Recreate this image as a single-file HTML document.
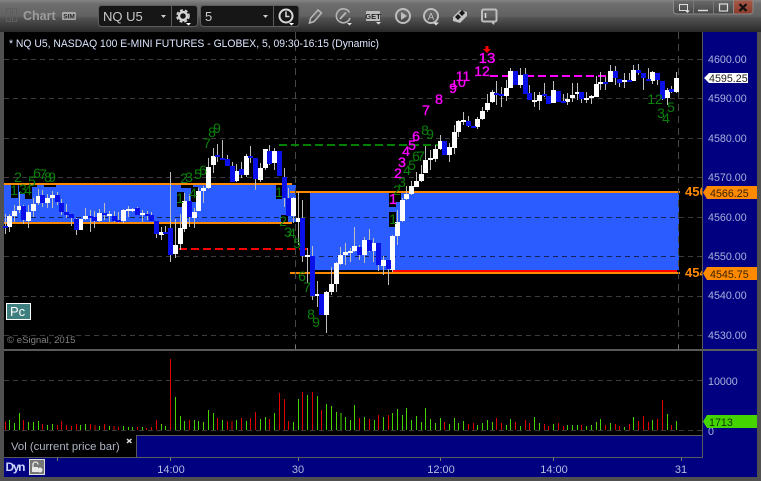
<!DOCTYPE html>
<html><head><meta charset="utf-8"><title>Chart</title>
<style>
html,body{margin:0;padding:0;background:#444;width:761px;height:481px;overflow:hidden}
svg{display:block;font-family:"Liberation Sans",sans-serif}
</style></head><body>
<svg width="761" height="481" viewBox="0 0 761 481" xmlns="http://www.w3.org/2000/svg">
<defs>
<linearGradient id="t1" x1="0" y1="0" x2="0" y2="1"><stop offset="0" stop-color="#858585"/><stop offset=".12" stop-color="#6e6e6e"/><stop offset=".5" stop-color="#626262"/><stop offset=".56" stop-color="#525252"/><stop offset="1" stop-color="#292929"/></linearGradient>
<linearGradient id="cl" x1="0" y1="0" x2="0" y2="1"><stop offset="0" stop-color="#a85a48"/><stop offset="1" stop-color="#8a3a2a"/></linearGradient>
<linearGradient id="wb" x1="0" y1="0" x2="0" y2="1"><stop offset="0" stop-color="#6a6a6a"/><stop offset="1" stop-color="#454545"/></linearGradient>
</defs>
<rect width="761" height="481" fill="#505050"/>
<rect width="761" height="32" fill="url(#t1)"/>
<!-- panes -->
<rect x="4" y="32" width="698" height="425" fill="#000"/>
<rect x="703" y="32" width="54" height="445" fill="#000080"/>
<rect x="4" y="457" width="699" height="20" fill="#000080"/>
<rect x="136" y="436" width="566" height="21" fill="#000080"/>
<g fill="#5a5a5a" shape-rendering="crispEdges">
<rect x="702" y="32" width="1" height="426"/>
<rect x="4" y="349" width="753" height="2"/>
<rect x="136" y="435" width="566" height="1"/>
<rect x="4" y="457" width="699" height="1"/>
<rect x="136" y="435" width="1" height="22"/>
</g>
<!-- grid -->
<g stroke="#3c3c3c" stroke-width="1" stroke-dasharray="5 4" shape-rendering="crispEdges" fill="none">
<path d="M4 59.5H702M4 98.5H702M4 138.5H702M4 177.5H702M4 217.5H702M4 256.5H702M4 296.5H702M4 335.5H702M4 380.5H702M4 430.5H702"/>
</g>
<!-- blue zones -->
<g shape-rendering="crispEdges">
<rect x="4" y="185" width="292" height="37" fill="#2a5cff"/>
<rect x="310" y="193" width="369" height="77" fill="#2a5cff"/>
<path d="M4 217.5H296M310 217.5H679M310 256.5H679" stroke="#15225a" stroke-dasharray="5 4" fill="none"/>
<g fill="#000">
<rect x="11" y="185" width="7" height="13"/><rect x="19" y="185" width="6" height="9"/><rect x="25" y="185" width="7" height="14"/><rect x="32" y="185" width="5" height="2"/><rect x="44" y="185" width="12" height="2"/>
<rect x="177" y="192" width="7" height="15"/><rect x="181" y="185" width="12" height="3"/><rect x="191" y="187" width="7" height="15"/>
<rect x="276" y="185" width="6" height="14"/><rect x="281" y="215" width="7" height="8"/>
<rect x="389" y="193" width="7" height="14"/><rect x="389" y="212" width="7" height="15"/><rect x="394" y="193" width="7" height="9"/>
</g>
<path d="M4 184H292M4 223H292M290 192H680" stroke="#ff8a00" stroke-width="2" fill="none"/>
<path d="M392 271H677" stroke="#f00" stroke-width="2"/>
<path d="M290 273H680" stroke="#ff8a00" stroke-width="2"/>
<path d="M295.5 32V349M678.5 32V349" stroke="#484848" stroke-dasharray="7 5" fill="none"/>
<path d="M279 145H440" stroke="#008000" stroke-width="2" stroke-dasharray="8 4" fill="none"/>
<path d="M179 249H310" stroke="#f00" stroke-width="2" stroke-dasharray="8 4" fill="none"/>
<path d="M490 76H606" stroke="#f0f" stroke-width="2" stroke-dasharray="8 4" fill="none"/>
<!-- wicks -->
<path fill="none" stroke="#bdbdbd" d="M5.5 214V234M9.5 214V232M14.5 205V222M19.5 192V213M23.5 205V224M28.5 205V228M33.5 198V217M38.5 189V205M42.5 190V207M47.5 194V208M52.5 191V208M57.5 192V205M61.5 199V215M66.5 204V218M71.5 214V226M76.5 218V235M85.5 208V220M90.5 210V232M94.5 211V228M99.5 209V222M104.5 203V220M109.5 211V222M114.5 211V222M118.5 212V223M123.5 209V223M128.5 206V217M132.5 208V212M137.5 207V215M142.5 210V222M147.5 211V220M151.5 212V221M156.5 221V238M161.5 227V240M165.5 226V234M170.5 172V262M175.5 219V258M180.5 214V250M184.5 193V232M189.5 194V227M194.5 208V228M198.5 188V211M203.5 186V203M208.5 158V189M213.5 148V173M217.5 144V162M222.5 140V160M227.5 155V166M232.5 162V182M236.5 164V182M241.5 162V178M246.5 154V177M250.5 146V163M255.5 158V190M260.5 163V182M265.5 149V170M269.5 145V165M274.5 148V170M284.5 168V207M288.5 188V216M293.5 197V223M298.5 192V245M302.5 200V262M307.5 248V283M312.5 246V300M317.5 281V307M326.5 291V333M331.5 267V295M336.5 262V292M340.5 247V265M345.5 243V265M350.5 248V262M354.5 227V252M359.5 245V260M364.5 237V263M369.5 229V252M373.5 238V262M378.5 243V271M383.5 256V275M388.5 260V285M392.5 235V272M397.5 210V245M402.5 198V222M406.5 186V200M411.5 181V195M416.5 172V187M421.5 165V182M425.5 146V173M430.5 150V170M435.5 145V162M440.5 135V150M449.5 143V162M454.5 125V154M458.5 120V137M463.5 112V125M468.5 116V127M477.5 117V129M482.5 107V120M487.5 94V112M492.5 90V103M496.5 81V105M501.5 87V107M506.5 80V101M510.5 68V88M520.5 68V88M525.5 68V94M529.5 85V100M534.5 92V107M539.5 92V110M544.5 83V97M553.5 81V103M563.5 94V103M567.5 93V105M572.5 83V102M577.5 83V100M581.5 92V103M586.5 92V103M591.5 95V104M596.5 76V97M600.5 72V90M605.5 77V90M610.5 65V82M615.5 66V85M619.5 79V87M624.5 73V88M629.5 73V82M633.5 65V81M638.5 64V75M643.5 73V90M648.5 68V81M652.5 71V84M657.5 73V85M662.5 81V100M667.5 88V105M671.5 86V93M676.5 72V93"/>
<!-- white bodies -->
<path fill="none" stroke="#fff" stroke-width="5" d="M9.5 216V227M14.5 211V216M19.5 206V210M28.5 212V221M33.5 204V211M38.5 196V203M47.5 198V203M52.5 195V198M80.5 219V230M85.5 216V219M99.5 213V221M109.5 214V216M123.5 210V221M128.5 209V211M132.5 209V211M142.5 213V215M161.5 232V235M175.5 245V254M180.5 228V244M184.5 201V229M194.5 212V218M198.5 191V211M203.5 188V191M208.5 167V188M213.5 156V165M236.5 171V181M246.5 156V175M260.5 168V180M265.5 149V168M274.5 151V163M293.5 198V216M298.5 218V222M307.5 255V257M317.5 294V296M326.5 292V315M331.5 284V292M336.5 263V284M340.5 255V264M345.5 252V255M350.5 251V253M354.5 246V251M364.5 240V255M373.5 243V251M383.5 260V266M392.5 236V270M397.5 222V236M402.5 200V221M406.5 194V199M411.5 186V194M416.5 181V187M421.5 174V181M425.5 160V173M430.5 158V160M435.5 149V159M440.5 141V149M449.5 147V155M454.5 132V148M458.5 121V132M463.5 120V122M477.5 119V127M482.5 111V119M487.5 103V110M492.5 92V102M506.5 88V96M510.5 71V88M520.5 75V85M534.5 100V102M539.5 95V101M553.5 90V103M567.5 99V102M572.5 95V98M577.5 92V94M586.5 98V100M591.5 96V98M596.5 84V97M600.5 82V84M610.5 71V82M624.5 80V82M633.5 70V81M652.5 72V81M667.5 90V98M676.5 78V92"/>
<!-- blue bodies -->
<path fill="none" stroke="#0a10e8" stroke-width="5" d="M5.5 226V228M23.5 206V220M42.5 195V203M57.5 195V202M61.5 203V212M66.5 212V215M71.5 214V218M76.5 219V230M90.5 216V218M94.5 217V221M104.5 213V215M114.5 216V221M118.5 220V222M137.5 208V215M147.5 214V216M151.5 215V221M156.5 221V234M165.5 232V234M170.5 228V255M189.5 201V217M217.5 155V157M222.5 158V160M227.5 159V166M232.5 166V182M241.5 169V175M250.5 156V158M255.5 158V179M269.5 151V164M279.5 151V176M284.5 177V198M288.5 198V216M302.5 218V256M312.5 256V296M321.5 294V315M359.5 247V255M369.5 240V251M378.5 243V265M388.5 260V269M444.5 141V155M468.5 121V126M473.5 126V128M496.5 93V95M501.5 94V96M515.5 71V85M525.5 74V94M529.5 93V100M544.5 94V96M548.5 96V104M558.5 91V102M563.5 101V103M581.5 92V99M605.5 82V84M615.5 71V78M619.5 79V83M629.5 80V82M638.5 70V73M643.5 73V78M648.5 79V81M657.5 73V80M662.5 81V99M671.5 89V92"/>
<!-- volume -->
<g transform="translate(0 340) scale(.33333)" fill="none" stroke-width="3">
<path stroke="#45d400" d="M28 270V240M43 270V249M58 270V219M86 270V246M100 270V246M115 270V243M143 270V255M157 270V252M242 270V255M257 270V252M299 270V258M328 270V258M371 270V258M385 270V261M398 270V261M427 270V261M484 270V252M497 270V258M526 270V171M541 270V228M553 270V243M583 270V240M596 270V243M610 270V246M625 270V210M640 270V219M667 270V240M709 270V240M739 270V243M781 270V237M796 270V231M823 270V219M881 270V246M895 270V177M923 270V165M952 270V168M979 270V192M994 270V198M1009 270V216M1023 270V219M1036 270V231M1051 270V240M1063 270V195M1093 270V231M1123 270V240"/>
<path stroke="#e00000" d="M16 270V245M71 270V240M128 270V252M172 270V255M185 270V243M200 270V255M214 270V258M229 270V252M271 270V252M285 270V255M314 270V252M342 270V258M356 270V261M413 270V261M440 270V264M455 270V261M470 270V240M511 270V57M568 270V240M653 270V234M682 270V243M696 270V243M724 270V234M751 270V234M766 270V216M808 270V237M838 270V159M853 270V177M866 270V243M908 270V156M938 270V156M965 270V210M1078 270V234M1108 270V237M1136 270V225"/>
<g transform="translate(1140 0)">
<path stroke="#45d400" d="M10 270V231M37 270V219M52 270V207M67 270V225M79 270V204M94 270V240M109 270V228M124 270V246M136 270V204M151 270V237M166 270V249M181 270V234M208 270V252M223 270V234M235 270V249M250 270V243M292 270V255M307 270V249M322 270V240M337 270V246M379 270V255M391 270V237M421 270V258M463 270V231M478 270V249M520 270V252M562 270V255M577 270V255M592 270V255M619 270V258M634 270V255M649 270V246M661 270V237M691 270V249M733 270V261M760 270V231M817 270V240M862 270V222M889 270V243"/>
<path stroke="#e00000" d="M25 270V225M193 270V246M265 270V252M280 270V249M349 270V234M364 270V249M406 270V246M436 270V240M448 270V249M493 270V252M505 270V258M535 270V249M550 270V258M604 270V255M676 270V255M706 270V252M718 270V258M748 270V252M775 270V243M790 270V228M805 270V246M832 270V237M847 270V180M874 270V255"/>
</g>
</g>
<!-- ticks -->
<path stroke="#777" fill="none" d="M295.5 345V349M678.5 345V349M57.5 458V461M170.5 458V461M298.5 458V461M440.5 458V461M553.5 458V461M681.5 458V461"/>
</g>
<!-- Sequential counts -->
<g fill="#0a800a" font-size="14" text-anchor="middle">
<text x="18" y="182">2</text><text x="14" y="195">1</text><text x="23" y="194">3</text><text x="28" y="195">4</text><text x="32" y="186">5</text><text x="37" y="178">6</text><text x="43" y="179">7</text><text x="48" y="182">8</text><text x="52" y="182">9</text>
<text x="207" y="148">7</text><text x="212" y="137">8</text><text x="217" y="133">9</text>
<text x="180" y="203">1</text><text x="184" y="183">2</text><text x="189" y="182">3</text><text x="193" y="198">4</text><text x="198" y="179">5</text><text x="203" y="175">6</text>
<text x="279" y="197">1</text><text x="283" y="226">2</text><text x="288" y="237">3</text><text x="292" y="238">4</text><text x="297" y="248">5</text><text x="302" y="281">6</text><text x="307" y="292">7</text><text x="311" y="319">8</text><text x="316" y="327">9</text>
<text x="393" y="224">1</text><text x="397" y="195">2</text><text x="402" y="187">3</text><text x="407" y="175">4</text><text x="412" y="170">5</text><text x="416" y="161">6</text><text x="421" y="161">7</text><text x="425" y="135">8</text><text x="430" y="139">9</text>
<text x="655" y="104">12</text><text x="661" y="118">3</text><text x="666" y="123">4</text><text x="671" y="112">5</text>
</g>
<g fill="#f0f" stroke="#f0f" stroke-width=".35" font-size="14" text-anchor="middle">
<text x="393" y="204" font-size="15">1</text><text x="398" y="178">2</text><text x="402" y="167">3</text><text x="406" y="156">4</text><text x="412" y="150">5</text><text x="416" y="141">6</text><text x="426" y="115">7</text><text x="439" y="104">8</text>
<text x="453" y="93">9</text><text x="458" y="87">10</text>
<rect x="449" y="68" width="24" height="12" fill="#000" stroke="none"/>
<text x="463" y="81">11</text><text x="482" y="76">12</text><text x="487" y="63" font-size="15">13</text>
</g>
<path d="M485.5 46H488.5V49H491L487 53L483 49H485.5Z" fill="#f00"/>
<!-- chart header -->
<text x="9" y="47" font-size="11" fill="#dde6ff" textLength="370" lengthAdjust="spacingAndGlyphs">* NQ U5, NASDAQ 100 E-MINI FUTURES - GLOBEX, 5, 09:30-16:15 (Dynamic)</text>
<rect x="6.5" y="303.5" width="24" height="16" fill="#3f7f7f" stroke="#fff"/>
<text x="10" y="316" font-size="13" fill="#fff">Pc</text>
<text x="7" y="343" font-size="9.6" fill="#808080">© eSignal, 2015</text>
<text x="685" y="196" font-size="13" font-weight="bold" fill="#ff8a00">456</text>
<text x="685" y="277" font-size="13" font-weight="bold" fill="#ff8a00">454</text>
<rect x="702" y="180" width="55" height="105" fill="#000080"/>
<rect x="702" y="180" width="1" height="105" fill="#5a5a5a"/>
<!-- axis -->
<g font-size="10.7" fill="#aab2dc">
<text x="708" y="63">4600.00</text><text x="708" y="102">4590.00</text><text x="708" y="142">4580.00</text><text x="708" y="181">4570.00</text><text x="708" y="221">4560.00</text><text x="708" y="260">4550.00</text><text x="708" y="299">4540.00</text><text x="708" y="339">4530.00</text>
<text x="708" y="385">10000</text><text x="708" y="435">0</text>
</g>
<path d="M704 78L709 73H748V83H709Z" fill="#fff"/>
<text x="709" y="82" font-size="10.7" fill="#222">4595.25</text>
<path d="M703 192.5L707 186H757V199H707Z" fill="#ff8a00"/>
<text x="710" y="197" font-size="10.7" fill="#3a2200">4566.25</text>
<path d="M703 273.5L707 267H757V280H707Z" fill="#ff8a00"/>
<text x="710" y="278" font-size="10.7" fill="#3a2200">4545.75</text>
<path d="M703 421.5L707 415H757V428H707Z" fill="#44d400"/>
<text x="709" y="426" font-size="10.7" fill="#0c3300">1713</text>
<!-- legend and time axis -->
<text x="11" y="450" font-size="11.3" fill="#aeb4c4">Vol (current price bar)</text>
<path d="M127 439L131.5 443M131.5 439L127 443" stroke="#ddd" stroke-width="1.5"/>
<text x="5.5" y="471" font-size="12" font-weight="bold" fill="#cdd6ff" textLength="20">Dyn</text>
<rect x="29.5" y="459.5" width="15" height="15" fill="#777" stroke="#ddd"/>
<path d="M33 468V464.5A2.5 2.5 0 0 1 38 464.5" stroke="#e8e8e8" fill="none" stroke-width="1.3"/><rect x="32" y="467" width="6" height="5" fill="#e8e8e8"/><circle cx="40" cy="470" r="2.5" fill="#e8e8e8"/>
<g font-size="11" fill="#b6bde0" text-anchor="middle">
<text x="171" y="473">14:00</text><text x="298" y="473">30</text><text x="441" y="473">12:00</text><text x="554" y="473">14:00</text><text x="681" y="473">31</text>
</g>
<!-- toolbar -->
<g fill="none" stroke="#5e5e5e"><rect x="6.5" y="8.5" width="4" height="13"/><rect x="12.5" y="8.5" width="4" height="13"/></g>
<text x="23" y="20" font-size="12.5" font-weight="bold" fill="#9c9c9c">Chart</text>
<rect x="62" y="12" width="14" height="8" rx="1" fill="#a8a8a8"/>
<text x="69" y="18.5" font-size="6.5" font-weight="bold" fill="#222" text-anchor="middle">SIM</text>
<g fill="#161616" stroke="#5c5c5c"><rect x="98.5" y="5.5" width="99" height="21" rx="3"/><rect x="200.5" y="5.5" width="98.5" height="21" rx="3"/></g>
<path d="M171.5 6V26M273.5 6V26" stroke="#5c5c5c"/>
<text x="103" y="21" font-size="13" fill="#c8c8c8">NQ U5</text>
<text x="205" y="21" font-size="13" fill="#c8c8c8">5</text>
<path d="M161 15H166L163.5 18ZM263 15H268L265.5 18Z" fill="#ccc"/>
<g fill="none" stroke="#d8d8d8">
<circle cx="183" cy="16" r="4" stroke-width="2.4"/><circle cx="183" cy="16" r="6" stroke-width="1.6" stroke-dasharray="3 2"/>
<circle cx="286" cy="16" r="6.5" stroke-width="2"/><path d="M286 11.5V16.5H289.5" stroke-width="1.5"/>
</g>
<path d="M186 23H191L188.5 25.5ZM289 23H294L291.5 25.5Z" fill="#fff"/>
<g fill="none" stroke="#b4b4b4" stroke-width="1.6">
<path d="M309.5 23L310.5 18.500L318 10L321.500 13L314 21.500Z"/>
<path d="M349.5 12.500A7 7 0 1 0 350 18"/><path d="M340 19L346 12.500" stroke-width="2"/>
</g>
<path d="M347 23H352L349.5 25.500ZM376 22H381L378.5 24.500Z" fill="#ddd"/>
<rect x="366" y="11" width="14" height="10" rx="1" fill="#bdbdbd"/>
<text x="373" y="19" font-size="7.5" font-weight="bold" fill="#222" text-anchor="middle">GET</text>
<g fill="none" stroke="#bdbdbd" stroke-width="2">
<circle cx="403" cy="16" r="7"/><circle cx="431" cy="16" r="7"/>
<rect x="482" y="9.5" width="14.5" height="12" rx="1.5"/>
</g>
<path d="M401 12V20L407 16Z" fill="#bdbdbd"/>
<text x="431" y="20" font-size="10" fill="#bdbdbd" text-anchor="middle">A</text>
<path d="M433 22.5H439L436 25.5Z" fill="#ddd"/>
<path d="M453 17L460 10L467 12L467 16L460 23L453 21Z" fill="#c4c4c4"/>
<path d="M455 17L458 14L461 17L458 20ZM459 13L462 10L465 13L462 16Z" fill="#1a1a1a"/>
<path d="M490 21.5L495 21.5L494 25Z" fill="#bdbdbd"/>
<path d="M485.5 13V18" stroke="#ddd" stroke-width="1.5"/>
<!-- window buttons -->
<path d="M673.5 0V11A3 3 0 0 0 676.5 14H733.5V0Z" fill="url(#wb)" stroke="#8a8a8a"/>
<path d="M733.5 0V14H750A3 3 0 0 0 753 11V0Z" fill="url(#cl)" stroke="#8a8a8a"/>
<path d="M693.5 0V14M713.5 0V14" stroke="#7a7a7a"/>
<g fill="none" stroke="#dcdcdc"><rect x="679.5" y="4.5" width="8" height="6" stroke-width="1"/><path d="M698 10.5H708" stroke-width="1.5"/><rect x="719.5" y="4" width="8" height="7" stroke-width="1.2"/></g>
<path d="M739.5 4L746.5 11M746.5 4L739.5 11" stroke="#111" stroke-width="2.2"/>
<path d="M685 10.5H690L687.5 13Z" fill="#ddd"/>
</svg>
</body></html>
